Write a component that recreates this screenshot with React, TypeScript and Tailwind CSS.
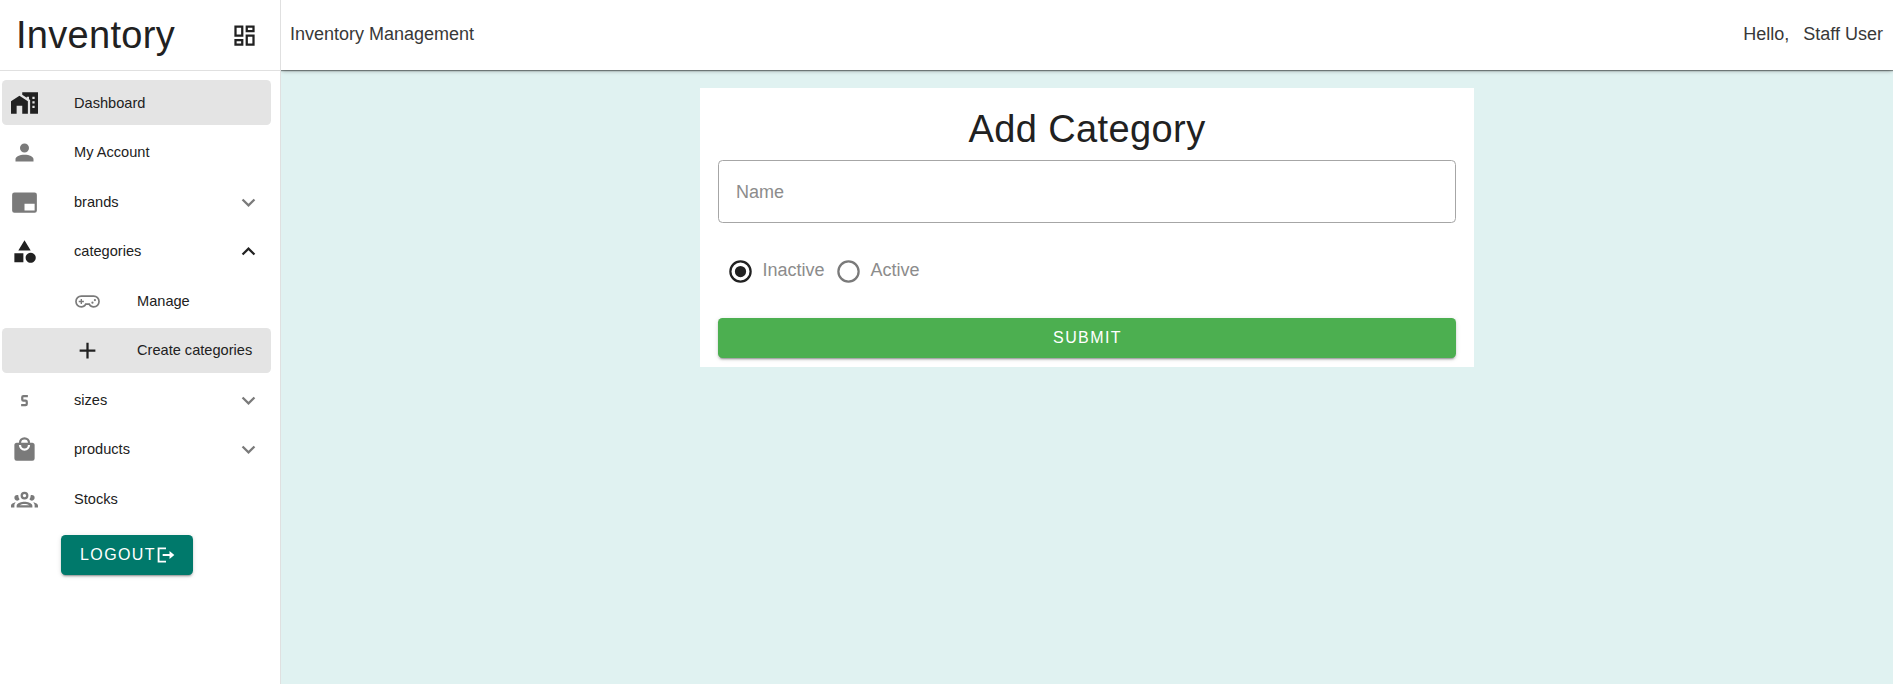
import React from "react";

const icons = {
  dashboard:
    "M19,5V7H15V5H19M9,5V11H5V5H9M19,13V19H15V13H19M9,17V19H5V17H9M21,3H13V9H21V3M11,3H3V13H11V3M21,11H13V21H21V11M11,15H3V21H11V15Z",
  homeCity:
    "M0,21V10L7.5,5L15,10V21H10V14H5V21H0M24,2V21H17V8.93L16,8.27V6H14V6.93L10,4.27V2H24M21,14H19V16H21V14M21,10H19V12H21V10M21,6H19V8H21V6Z",
  account:
    "M12,4A4,4 0 0,1 16,8A4,4 0 0,1 12,12A4,4 0 0,1 8,8A4,4 0 0,1 12,4M12,14C16.42,14 20,15.79 20,18V20H4V18C4,15.79 7.58,14 12,14Z",
  brand:
    "M21,3H3A2,2 0 0,0 1,5V19A2,2 0 0,0 3,21H21A2,2 0 0,0 23,19V5A2,2 0 0,0 21,3M21,19H12V13H21V19Z",
  shape:
    "M11,13.5V21.5H3V13.5H11M12,2L17.5,11H6.5L12,2M17.5,13C20,13 22,15 22,17.5C22,20 20,22 17.5,22C15,22 13,20 13,17.5C13,15 15,13 17.5,13Z",
  gamepad:
    "M6.5,6.5A5.5,5.5 0 0,0 6.5,17.5C8.4,17.5 10,16.5 10.9,15H13.1C14,16.5 15.6,17.5 17.5,17.5A5.5,5.5 0 0,0 17.5,6.5ZM6.5,8H17.5A4,4 0 0,1 17.5,16C15.9,16 14.7,15 14.1,13.5H9.9C9.3,15 8.1,16 6.5,16A4,4 0 0,1 6.5,8ZM5.9,9.7H7.1V11.4H8.8V12.6H7.1V14.3H5.9V12.6H4.2V11.4H5.9ZM18.6,9.7A1,1 0 0,1 18.6,11.7A1,1 0 0,1 18.6,9.7ZM16.4,12A1,1 0 0,1 16.4,14A1,1 0 0,1 16.4,12Z",
  plus: "M19,13H13V19H11V13H5V11H11V5H13V11H19V13Z",
  sizeS:
    "M11,7A2,2 0 0,0 9,9V11A2,2 0 0,0 11,13H13V15H9V17H13A2,2 0 0,0 15,15V13A2,2 0 0,0 13,11H11V9H15V7H11Z",
  shopping:
    "M12,13A5,5 0 0,1 7,8H9A3,3 0 0,0 12,11A3,3 0 0,0 15,8H17A5,5 0 0,1 12,13M12,3A3,3 0 0,1 15,6H9A3,3 0 0,1 12,3M19,6H17A5,5 0 0,0 12,1A5,5 0 0,0 7,6H5C3.89,6 3,6.89 3,8V20A2,2 0 0,0 5,22H19A2,2 0 0,0 21,20V8C21,6.89 20.1,6 19,6Z",
  group:
    "M12,5A3.5,3.5 0 0,0 8.5,8.5A3.5,3.5 0 0,0 12,12A3.5,3.5 0 0,0 15.5,8.5A3.5,3.5 0 0,0 12,5M12,7A1.5,1.5 0 0,1 13.5,8.5A1.5,1.5 0 0,1 12,10A1.5,1.5 0 0,1 10.5,8.5A1.5,1.5 0 0,1 12,7M5.5,8A2.5,2.5 0 0,0 3,10.5C3,11.44 3.53,12.25 4.29,12.68C4.65,12.88 5.06,13 5.5,13C5.94,13 6.35,12.88 6.71,12.68C7.08,12.47 7.39,12.17 7.62,11.81C6.89,10.86 6.5,9.7 6.5,8.5C6.5,8.41 6.5,8.31 6.5,8.22C6.2,8.08 5.86,8 5.5,8M18.5,8C18.14,8 17.8,8.08 17.5,8.22C17.5,8.31 17.5,8.41 17.5,8.5C17.5,9.7 17.11,10.86 16.38,11.81C16.5,12 16.63,12.15 16.78,12.3C16.94,12.45 17.1,12.58 17.29,12.68C17.65,12.88 18.06,13 18.5,13C18.94,13 19.35,12.88 19.71,12.68C20.47,12.25 21,11.44 21,10.5A2.5,2.5 0 0,0 18.5,8M12,14C9.66,14 5,15.17 5,17.5V19H19V17.5C19,15.17 14.34,14 12,14M4.71,14.55C2.78,14.78 0,15.76 0,17.5V19H3V17.07C3,16.06 3.69,15.22 4.71,14.55M19.29,14.55C20.31,15.22 21,16.06 21,17.07V19H24V17.5C24,15.76 21.22,14.78 19.29,14.55M12,16C13.53,16 15.24,16.5 16.23,17H7.77C8.76,16.5 10.47,16 12,16Z",
  down: "M7.41,8.58L12,13.17L16.59,8.58L18,10L12,16L6,10L7.41,8.58Z",
  up: "M7.41,15.41L12,10.83L16.59,15.41L18,14L12,8L6,14L7.41,15.41Z",
  radioOn:
    "M12,20A8,8 0 0,1 4,12A8,8 0 0,1 12,4A8,8 0 0,1 20,12A8,8 0 0,1 12,20M12,2A10,10 0 0,0 2,12A10,10 0 0,0 12,22A10,10 0 0,0 22,12A10,10 0 0,0 12,2M12,7A5,5 0 0,0 7,12A5,5 0 0,0 12,17A5,5 0 0,0 17,12A5,5 0 0,0 12,7Z",
  radioOff:
    "M12,20A8,8 0 0,1 4,12A8,8 0 0,1 12,4A8,8 0 0,1 20,12A8,8 0 0,1 12,20M12,2A10,10 0 0,0 2,12A10,10 0 0,0 12,22A10,10 0 0,0 22,12A10,10 0 0,0 12,2Z",
  exit: "M2,3H12V5.2H4.2V18.8H12V21H2V3ZM16.2,7.2L22,12L16.2,16.8V13.1H8V10.9H16.2V7.2Z",
};

function Icon({ name, className = "" }: { name: keyof typeof icons; className?: string }) {
  return (
    <svg viewBox="0 0 24 24" fill="currentColor" className={`shrink-0 ${className}`}>
      <path d={icons[name]} fillRule={name === "gamepad" ? "evenodd" : "nonzero"} />
    </svg>
  );
}

type Item = {
  icon: keyof typeof icons;
  label: string;
  arrow?: "up" | "down";
  active?: boolean;
  dark?: boolean;
  nested?: boolean;
};

const items: Item[] = [
  { icon: "homeCity", label: "Dashboard", active: true, dark: true },
  { icon: "account", label: "My Account" },
  { icon: "brand", label: "brands", arrow: "down" },
  { icon: "shape", label: "categories", arrow: "up", dark: true },
  { icon: "gamepad", label: "Manage", nested: true },
  { icon: "plus", label: "Create categories", nested: true, active: true, dark: true },
  { icon: "sizeS", label: "sizes", arrow: "down" },
  { icon: "shopping", label: "products", arrow: "down" },
  { icon: "group", label: "Stocks" },
];

function NavItem({ icon, label, arrow, active, dark, nested }: Item) {
  const tone = dark ? "text-[#212121]" : "text-[#7a7a7a]";
  return (
    <a
      className={`flex h-[45px] items-center rounded-[4.5px] pr-[13.5px] ${nested ? "pl-[72px]" : "pl-[9px]"} ${active ? "bg-[#e4e4e4]" : ""}`}
    >
      <Icon name={icon} className={`mt-px size-[27px] ${tone}`} />
      <span className="ml-[36px] flex-1 whitespace-nowrap text-[14.6px] leading-[18px] text-[#212121]">{label}</span>
      {arrow && <Icon name={arrow} className={`mr-[-4.5px] mt-px size-[27px] ${tone}`} />}
    </a>
  );
}

export default function App() {
  return (
    <div className="flex h-[684px] w-full overflow-hidden bg-[#e0f2f1] font-['Liberation_Sans',Arial,sans-serif] text-[#212121]">
      <aside className="relative z-10 flex w-[281px] shrink-0 flex-col border-r border-[#e0e0e0] bg-white">
        <div className="flex h-[71px] items-center justify-between border-b border-[#e0e0e0] pl-4 pr-[22px]">
          <h1 className="text-[38px] leading-[45px] tracking-[0.3px]">Inventory</h1>
          <Icon name="dashboard" className="size-[27px]" />
        </div>
        <nav className="flex flex-col gap-[4.5px] pl-[2px] pr-[9px] pt-[9px]">
          {items.map((item) => (
            <NavItem key={item.label} {...item} />
          ))}
        </nav>
        <button className="ml-[61px] mt-[14px] flex h-10 w-[132px] items-center justify-center rounded-[4.5px] bg-[#00796b] pl-[2px] text-base tracking-[1.4px] text-white shadow-[0_3px_1px_-2px_rgba(0,0,0,.2),0_2px_2px_0_rgba(0,0,0,.14),0_1px_5px_0_rgba(0,0,0,.12)]">
          LOGOUT
          <Icon name="exit" className="size-5" />
        </button>
      </aside>
      <div className="flex min-w-0 flex-1 flex-col">
        <header className="flex h-[70px] shrink-0 items-center justify-between bg-white pl-[9px] pr-[10px] text-[18px] text-[#383838] shadow-[0_2px_4px_-1px_rgba(0,0,0,.3),0_1px_1px_0_rgba(0,0,0,.4)]">
          <span className="mb-[2px]">Inventory Management</span>
          <span className="mb-[2px] flex gap-[14px]">
            <span>Hello,</span>
            <span>Staff User</span>
          </span>
        </header>
        <main className="flex justify-center pt-[18px]">
          <form className="flex h-[279px] w-[774px] flex-col bg-white px-[18px] pt-[19px]">
            <h2 className="text-center text-[38px] leading-[45px] tracking-[0.4px]">Add Category</h2>
            <div className="mt-[8px] flex h-[63px] items-center rounded-[4.5px] border border-[#a6a6a6] px-[17px] pt-[2px] text-[18px] text-[#8c8c8c]">
              Name
            </div>
            <div className="mt-[25px] flex h-[45px] items-center pl-[8.5px] text-[18px] text-[#8c8c8c]">
              <Icon name="radioOn" className="mt-px size-[27px] text-[#212121]" />
              <span className="ml-[9px] mr-[10px]">Inactive</span>
              <Icon name="radioOff" className="mt-px size-[27px] text-[#7a7a7a]" />
              <span className="ml-[9px]">Active</span>
            </div>
            <button
              type="button"
              className="mt-[25px] h-10 shrink-0 rounded-[4.5px] bg-[#4caf50] pl-px text-base tracking-[1.4px] text-white shadow-[0_3px_1px_-2px_rgba(0,0,0,.2),0_2px_2px_0_rgba(0,0,0,.14),0_1px_5px_0_rgba(0,0,0,.12)]"
            >
              SUBMIT
            </button>
          </form>
        </main>
      </div>
    </div>
  );
}
